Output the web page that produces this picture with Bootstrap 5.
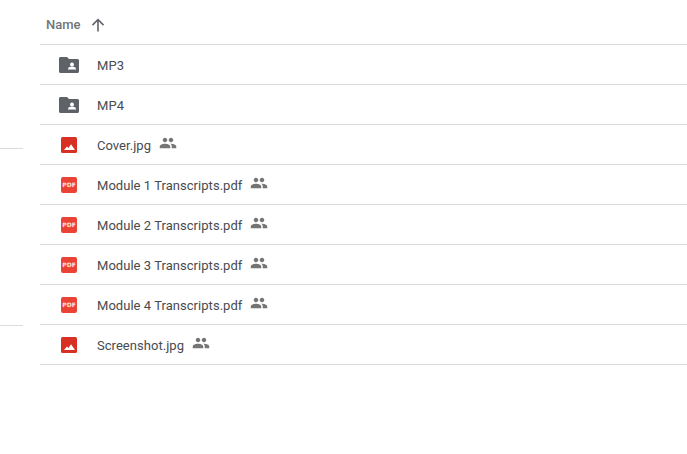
<!DOCTYPE html>
<html lang="en">
<head>
<meta charset="utf-8">
<title>Files</title>
<link href="https://cdn.jsdelivr.net/npm/bootstrap@5.3.0/dist/css/bootstrap.min.css" rel="stylesheet">
<style>
html,body{height:100%;overflow:hidden;background:#fff}
body{font-family:Roboto,"Liberation Sans",sans-serif;font-size:13px;color:#484b4f}
.shell{height:454px;width:687px;overflow:hidden}
.rail{width:40px;flex:none}
.rail-line{width:23px;height:1px;background:#dadce0}
.rail-line.one{margin-top:148px}
.rail-line.two{margin-top:176px}
.pane{flex:1;min-width:0}
.head-row{height:45px;border-bottom:1px solid #dadce0;padding-left:6px;padding-top:6px;color:#70757a;font-weight:500;font-size:13px}
.sort-arrow{margin-left:9px;display:block}
.file-row{height:40px;border-bottom:1px solid #dadce0}
.icon-cell{width:57px;padding-left:19px;flex:none}
.ficon{display:block}
.fname{line-height:40px;white-space:nowrap;padding-top:3px;letter-spacing:.04px}
.shared{margin-left:8px;display:block;margin-top:-3px}
.pdf-box{display:flex;align-items:center;justify-content:center;width:16px;height:16px;margin-left:2px;background:#ea4335;border-radius:2px;color:#fde3e0;font:700 6px/1 "DejaVu Sans",sans-serif}
.img-ico{margin-left:2px}
</style>
</head>
<body>
<svg width="0" height="0" class="d-block position-absolute">
<defs>
<symbol id="people" viewBox="0 0 24 24"><path fill="#757575" d="M16 11c1.66 0 2.99-1.34 2.99-3S17.66 5 16 5s-3 1.34-3 3 1.34 3 3 3zm-8 0c1.66 0 2.99-1.34 2.99-3S9.66 5 8 5 5 6.34 5 8s1.34 3 3 3zm0 2c-2.33 0-7 1.17-7 3.5V19h14v-2.5C15 14.17 10.33 13 8 13zm8 0c-.29 0-.62.02-.97.05 1.16.84 1.97 1.97 1.97 3.45V19h6v-2.5c0-2.33-4.67-3.5-7-3.5z"/></symbol>
<symbol id="sfolder" viewBox="0 0 20 16"><path fill="#5f6368" d="M1.500 0H8l2 2h8.500c.8 0 1.500.7 1.500 1.500v11c0 .8-.7 1.500-1.500 1.500h-17C.7 16 0 15.300 0 14.500v-13C0 .7.7 0 1.500 0z"/><circle cx="13" cy="7.400" r="2" fill="#fff"/><path fill="#fff" d="M9 12.500v-.9c0-1.300 2.700-2 4-2s4 .7 4 2v.9z"/></symbol>
<symbol id="imgfile" viewBox="0 0 16 16"><rect width="16" height="16" rx="1.500" fill="#d93025"/><path fill="#fff" d="M3 13l3-3.500 1.500 1.500L10 7.300 14 13z"/></symbol>
</defs>
</svg>
<div class="shell d-flex">
  <div class="rail">
    <div class="rail-line one"></div>
    <div class="rail-line two"></div>
  </div>
  <div class="pane">
    <div class="head-row d-flex align-items-center">
      <span>Name</span>
      <svg class="sort-arrow" width="16" height="16" viewBox="0 0 16 16"><path fill="#5f6368" d="M7.200 14.500V4.600L3 8.700 1.900 7.600 8 1.500l6.100 6.100-1.100 1.100-4.200-4.100v9.900z"/></svg>
    </div>
    <div class="file-row d-flex align-items-center">
      <div class="icon-cell"><svg class="ficon" width="20" height="16"><use href="#sfolder"/></svg></div>
      <span class="fname">MP3</span>
    </div>
    <div class="file-row d-flex align-items-center">
      <div class="icon-cell"><svg class="ficon" width="20" height="16"><use href="#sfolder"/></svg></div>
      <span class="fname">MP4</span>
    </div>
    <div class="file-row d-flex align-items-center">
      <div class="icon-cell"><svg class="ficon img-ico" width="16" height="16"><use href="#imgfile"/></svg></div>
      <span class="fname">Cover.jpg</span>
      <svg class="shared" width="18" height="18"><use href="#people"/></svg>
    </div>
    <div class="file-row d-flex align-items-center">
      <div class="icon-cell"><div class="pdf-box">PDF</div></div>
      <span class="fname">Module 1 Transcripts.pdf</span>
      <svg class="shared" width="18" height="18"><use href="#people"/></svg>
    </div>
    <div class="file-row d-flex align-items-center">
      <div class="icon-cell"><div class="pdf-box">PDF</div></div>
      <span class="fname">Module 2 Transcripts.pdf</span>
      <svg class="shared" width="18" height="18"><use href="#people"/></svg>
    </div>
    <div class="file-row d-flex align-items-center">
      <div class="icon-cell"><div class="pdf-box">PDF</div></div>
      <span class="fname">Module 3 Transcripts.pdf</span>
      <svg class="shared" width="18" height="18"><use href="#people"/></svg>
    </div>
    <div class="file-row d-flex align-items-center">
      <div class="icon-cell"><div class="pdf-box">PDF</div></div>
      <span class="fname">Module 4 Transcripts.pdf</span>
      <svg class="shared" width="18" height="18"><use href="#people"/></svg>
    </div>
    <div class="file-row d-flex align-items-center">
      <div class="icon-cell"><svg class="ficon img-ico" width="16" height="16"><use href="#imgfile"/></svg></div>
      <span class="fname">Screenshot.jpg</span>
      <svg class="shared" width="18" height="18"><use href="#people"/></svg>
    </div>
  </div>
</div>
<script src="https://cdn.jsdelivr.net/npm/bootstrap@5.3.0/dist/js/bootstrap.bundle.min.js"></script>
</body>
</html>
